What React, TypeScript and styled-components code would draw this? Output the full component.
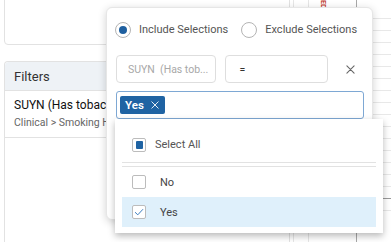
import React from 'react';
import styled, { createGlobalStyle } from 'styled-components';

const GlobalStyle = createGlobalStyle`
  html, body {
    margin: 0;
    padding: 0;
    background: #ffffff;
    font-family: Roboto, "Liberation Sans", Arial, sans-serif;
  }
  * {
    box-sizing: border-box;
  }
`;

const Page = styled.div`
  position: relative;
  display: flex;
  width: 391px;
  height: 242px;
  overflow: hidden;
  background: #ffffff;
`;

/* left side, behind the popup */
const LeftColumn = styled.div`
  display: flex;
  flex-direction: column;
  gap: 16px;
  width: 290px;
  padding-left: 4px;
`;

const TopCard = styled.div`
  height: 51px;
  margin-top: -6px;
  border: 1px solid #e2e2e2;
  border-radius: 4px;
`;

const FilterPanel = styled.div`
  flex: 1;
  border: 1px solid #e2e2e2;
  border-bottom: 0;
  border-radius: 4px 4px 0 0;
`;

const PanelHeader = styled.div`
  display: flex;
  align-items: center;
  height: 29px;
  padding-left: 9px;
  background: #eef2f6;
  border-bottom: 1px solid #e2e2e2;
  font-size: 13px;
  color: #333;
  border-radius: 4px 4px 0 0;
`;

const FilterItem = styled.div`
  display: flex;
  flex-direction: column;
  gap: 4px;
  height: 47px;
  padding: 7px 9px 0;
  border-bottom: 1px solid #e2e2e2;

  .name,
  .path {
    max-width: 92px;
    overflow: hidden;
    white-space: nowrap;
  }
  .name {
    font-size: 12px;
    line-height: 14px;
    color: #111;
  }
  .path {
    font-size: 10.5px;
    line-height: 13px;
    color: #666;
  }
`;

/* right side table, behind the popup */
const Grid = styled.div`
  display: flex;
  flex: 1;
`;

const GridCol = styled.div<{ $w: number; $line?: string }>`
  width: ${(p) => p.$w}px;
  flex: none;
  overflow: hidden;
  border-right: 1px solid ${(p) => p.$line || '#e6e6e6'};
`;

const RotatedLabel = styled.span`
  display: block;
  margin: 0 0 0 10px;
  width: 8px;
  height: 7px;
  overflow: hidden;
  writing-mode: vertical-rl;
  font-size: 7px;
  line-height: 8px;
  font-weight: 700;
  color: #c0392b;
  white-space: nowrap;
`;

const RowCol = styled.div`
  flex: 1;
  display: flex;
  flex-direction: column;
`;

const GridRow = styled.div<{ $dark?: boolean; $h?: number }>`
  height: ${(p) => p.$h || 12}px;
  flex: none;
  border-bottom: 1px solid ${(p) => (p.$dark ? '#9a9a9a' : '#e8e8e8')};
`;

/* the popup */
const Popup = styled.div`
  position: absolute;
  left: 106px;
  top: 7px;
  width: 267px;
  height: 213px;
  padding: 12px 8px 0 9px;
  background: #fff;
  border: 1px solid #e6e6e6;
  border-radius: 6px;
  box-shadow: 0 2px 8px rgba(0, 0, 0, 0.18);
`;

const RadioRow = styled.div`
  display: flex;
  align-items: center;
  gap: 13px;
  height: 19px;
  margin-left: -1px;
`;

const RadioOption = styled.label`
  display: flex;
  align-items: center;
  gap: 8px;
  font-size: 11px;
  color: #555;
  white-space: nowrap;
`;

const RadioCircle = styled.span<{ $on?: boolean }>`
  display: flex;
  align-items: center;
  justify-content: center;
  width: 16px;
  height: 16px;
  border-radius: 50%;
  border: 1px solid #b4b4b4;
  background: #fff;

  &::after {
    content: '';
    display: ${(p) => (p.$on ? 'block' : 'none')};
    width: 8px;
    height: 8px;
    border-radius: 50%;
    background: #1e5f9f;
  }
`;

const InputRow = styled.div`
  display: flex;
  align-items: center;
  gap: 9px;
  margin-top: 16px;
`;

const TextBox = styled.div<{ $w: number; $muted?: boolean }>`
  display: flex;
  align-items: center;
  width: ${(p) => p.$w}px;
  height: 28px;
  padding-left: ${(p) => (p.$muted ? 11 : 13)}px;
  border: 1px solid #dedede;
  border-radius: 4px;
  font-size: 10.5px;
  color: ${(p) => (p.$muted ? '#a8a8a8' : '#333')};
  white-space: pre;
`;

const IconButton = styled.span`
  display: flex;
  align-items: center;
  justify-content: center;
  width: 28px;
  height: 28px;
`;

const MultiSelect = styled.div`
  position: relative;
  display: flex;
  align-items: center;
  height: 28px;
  margin-top: 8px;
  padding-left: 3px;
  border: 1px solid #7ea8d4;
  border-radius: 3px;
`;

const Tag = styled.span`
  display: flex;
  align-items: center;
  gap: 7px;
  height: 18px;
  padding: 0 6px 0 5px;
  background: #1f63a3;
  border-radius: 2px;
  font-size: 11.5px;
  font-weight: 600;
  color: #fff;
`;

const Dropdown = styled.div`
  position: absolute;
  left: -2px;
  top: 27px;
  width: 268px;
  padding: 8px 7px 6px;
  background: #fff;
  box-shadow: 0 3px 7px rgba(0, 0, 0, 0.28);
`;

const SelectAllRow = styled.div`
  display: flex;
  align-items: center;
  gap: 9px;
  height: 36px;
  padding-left: 10px;
  border-bottom: 1px solid #e2e2e2;
  font-size: 11px;
  color: #555;
`;

const OptionList = styled.div`
  margin-top: 3px;
  border-top: 1px solid #e2e2e2;
`;

const OptionRow = styled.div<{ $active?: boolean }>`
  display: flex;
  align-items: center;
  gap: 14px;
  height: 30px;
  padding-left: 10px;
  background: ${(p) => (p.$active ? '#dff0fb' : 'transparent')};
  font-size: 11px;
  color: #444;
`;

const CheckBox = styled.span`
  display: flex;
  align-items: center;
  justify-content: center;
  width: 14px;
  height: 14px;
  border: 1px solid #bcbcbc;
  border-radius: 2px;
  background: #fff;
`;

const PartialMark = styled.span`
  width: 7px;
  height: 8px;
  background: #1f63a3;
  border-radius: 1px;
`;

const Cross = ({ size, color, width = 1.2 }: { size: number; color: string; width?: number }) => (
  <svg width={size} height={size} viewBox="0 0 10 10">
    <path d="M1 1 L9 9 M9 1 L1 9" stroke={color} strokeWidth={width} strokeLinecap="round" />
  </svg>
);

const Check = () => (
  <svg width="10" height="8" viewBox="0 0 10 8">
    <path d="M1 4.2 L3.8 6.8 L9 1.2" fill="none" stroke="#3d7fc1" strokeWidth="1" />
  </svg>
);

const options = [
  { label: 'No', checked: false },
  { label: 'Yes', checked: true },
];

const App = () => {
  const rows = Array.from({ length: 16 });

  return (
    <Page>
      <GlobalStyle />
      <LeftColumn>
        <TopCard />
        <FilterPanel>
          <PanelHeader>Filters</PanelHeader>
          <FilterItem>
            <span className="name">SUYN (Has tobacco use)</span>
            <span className="path">Clinical &gt; Smoking History</span>
          </FilterItem>
        </FilterPanel>
      </LeftColumn>

      <Grid>
        <GridCol $w={4} />
        <GridCol $w={15} />
        <GridCol $w={48} $line="#a8a8a8">
          <RotatedLabel>EDIT</RotatedLabel>
        </GridCol>
        <RowCol>
          <GridRow $h={19} />
          {rows.map((_, i) => (
            <GridRow key={i} $dark={i === 14} />
          ))}
        </RowCol>
      </Grid>

      <Popup>
        <RadioRow>
          <RadioOption>
            <RadioCircle $on />
            Include Selections
          </RadioOption>
          <RadioOption>
            <RadioCircle />
            Exclude Selections
          </RadioOption>
        </RadioRow>

        <InputRow>
          <TextBox $w={103} $muted>
            {'SUYN  (Has tob...'}
          </TextBox>
          <TextBox $w={105}>=</TextBox>
          <IconButton>
            <Cross size={9} color="#666" />
          </IconButton>
        </InputRow>

        <MultiSelect>
          <Tag>
            Yes
            <Cross size={8} color="#fff" width={1.1} />
          </Tag>

          <Dropdown>
            <SelectAllRow>
              <CheckBox>
                <PartialMark />
              </CheckBox>
              Select All
            </SelectAllRow>
            <OptionList>
              {options.map((o) => (
                <OptionRow key={o.label} $active={o.checked}>
                  <CheckBox>{o.checked && <Check />}</CheckBox>
                  {o.label}
                </OptionRow>
              ))}
            </OptionList>
          </Dropdown>
        </MultiSelect>
      </Popup>
    </Page>
  );
};

export default App;
